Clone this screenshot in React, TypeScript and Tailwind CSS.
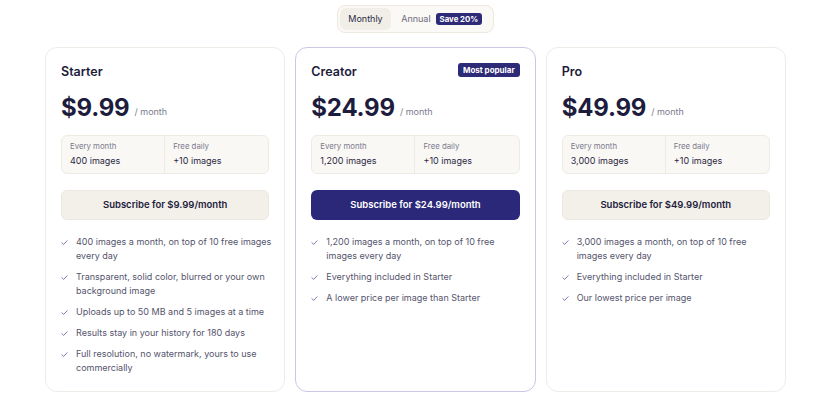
import { useState } from "react";

type Plan = {
  name: string;
  price: string;
  monthly: string;
  features: string[];
  popular?: boolean;
};

const PLANS: Plan[] = [
  {
    name: "Starter",
    price: "$9.99",
    monthly: "400 images",
    features: [
      "400 images a month, on top of 10 free images every day",
      "Transparent, solid color, blurred or your own background image",
      "Uploads up to 50 MB and 5 images at a time",
      "Results stay in your history for 180 days",
      "Full resolution, no watermark, yours to use commercially",
    ],
  },
  {
    name: "Creator",
    price: "$24.99",
    monthly: "1,200 images",
    popular: true,
    features: [
      "1,200 images a month, on top of 10 free images every day",
      "Everything included in Starter",
      "A lower price per image than Starter",
    ],
  },
  {
    name: "Pro",
    price: "$49.99",
    monthly: "3,000 images",
    features: [
      "3,000 images a month, on top of 10 free images every day",
      "Everything included in Starter",
      "Our lowest price per image",
    ],
  },
];

function Check() {
  return (
    <svg viewBox="0 0 12 12" className="mt-[4px] h-[7px] w-[7px] shrink-0" fill="none">
      <path d="M1.5 6.4l3 2.8L10.5 3" stroke="#5d5b9b" strokeWidth="1.4" strokeLinecap="round" strokeLinejoin="round" />
    </svg>
  );
}

function PlanCard({ plan }: { plan: Plan }) {
  return (
    <div
      className={
        "flex flex-col rounded-xl border bg-white px-[15px] pt-[16px] pb-[16px] " +
        (plan.popular ? "border-[#c9c7e2]" : "border-[#efece7]")
      }
    >
      <div className="flex items-start justify-between">
        <h2 className="text-[12.5px] font-semibold leading-[16px] text-[#1d1c3c]">{plan.name}</h2>
        {plan.popular && (
          <span className="-mt-px rounded-[3px] bg-[#2d2a78] px-[5px] py-[2px] text-[8px] font-bold leading-[10px] text-white">
            Most popular
          </span>
        )}
      </div>

      <div className="mt-[14px] flex items-end gap-[5px]">
        <span className="text-[24px] font-bold leading-[28px] tracking-[-0.2px] text-[#1d1c3c]">{plan.price}</span>
        <span className="mb-[4px] text-[9px] leading-[12px] text-[#7b7a8e]">/ month</span>
      </div>

      <div className="mt-[13px] grid grid-cols-2 rounded-md border border-[#efebe4] bg-[#faf8f4]">
        <div className="border-r border-[#efebe4] px-2 pt-[5px] pb-[6px]">
          <div className="text-[7.8px] leading-[11px] text-[#7b7a8e]">Every month</div>
          <div className="mt-[2px] text-[9px] leading-[13px] text-[#2a2944]">{plan.monthly}</div>
        </div>
        <div className="px-2 pt-[5px] pb-[6px]">
          <div className="text-[7.8px] leading-[11px] text-[#7b7a8e]">Free daily</div>
          <div className="mt-[2px] text-[9px] leading-[13px] text-[#2a2944]">+10 images</div>
        </div>
      </div>

      <button
        className={
          "mt-[16px] h-[30px] rounded-md text-[9.5px] font-semibold " +
          (plan.popular
            ? "bg-[#2b2879] text-white"
            : "border border-[#ece8e1] bg-[#f3f0ea] text-[#1d1c3c]")
        }
      >
        Subscribe for {plan.price}/month
      </button>

      <ul className="mt-[15px] -mr-[6px] flex flex-col gap-[7px]">
        {plan.features.map((f) => (
          <li key={f} className="flex gap-[8px] text-[9px] leading-[14px] text-[#55546c]">
            <Check />
            <span>{f}</span>
          </li>
        ))}
      </ul>
    </div>
  );
}

export default function App() {
  const [billing, setBilling] = useState<"monthly" | "annual">("monthly");

  return (
    <div className="min-h-screen bg-white pt-[5px] pl-[45px] pr-[39px] font-['Inter',sans-serif]">
      <div className="flex justify-center">
        <div className="flex items-center rounded-lg border border-[#eee9e0] bg-[#fbf9f5] p-[2px]">
          <button
            onClick={() => setBilling("monthly")}
            className={
              "h-[22px] rounded-md px-[8.5px] text-[9px] " +
              (billing === "monthly" ? "bg-[#f1eee8] text-[#2a2944]" : "text-[#6c6b80]")
            }
          >
            Monthly
          </button>
          <button
            onClick={() => setBilling("annual")}
            className={
              "flex h-[22px] items-center gap-[5px] rounded-md pl-[10px] pr-[9px] text-[9px] " +
              (billing === "annual" ? "bg-[#f1eee8] text-[#2a2944]" : "text-[#6c6b80]")
            }
          >
            Annual
            <span className="rounded-[3px] bg-[#2d2a78] px-[4px] py-[1px] text-[7.8px] font-bold leading-[10px] text-white">
              Save 20%
            </span>
          </button>
        </div>
      </div>

      <div className="mt-[14px] grid grid-cols-3 gap-[10px]">
        {PLANS.map((p) => (
          <PlanCard key={p.name} plan={p} />
        ))}
      </div>
    </div>
  );
}
